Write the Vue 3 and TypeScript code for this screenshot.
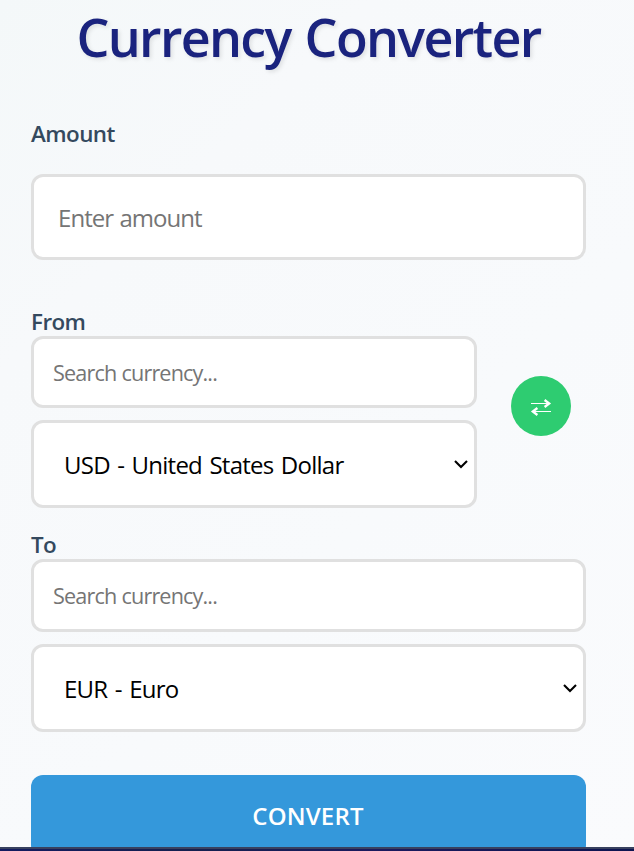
<script setup lang="ts">
import { ref } from 'vue'

interface Currency {
  code: string
  name: string
}

const currencies: Currency[] = [
  { code: 'USD', name: 'United States Dollar' },
  { code: 'EUR', name: 'Euro' },
]

const amount = ref('')
const fromSearch = ref('')
const toSearch = ref('')
const from = ref('USD')
const to = ref('EUR')

function swap(): void {
  const previous = from.value
  from.value = to.value
  to.value = previous
}
</script>

<template>
  <div class="page">
    <main class="converter">
      <h1 class="title">Currency Converter</h1>

      <label class="label amount-label" for="amount">Amount</label>
      <input id="amount" v-model="amount" class="field amount" placeholder="Enter amount" />

      <div class="row">
        <section class="group">
          <label class="label" for="from">From</label>
          <input v-model="fromSearch" class="field search" placeholder="Search currency..." />
          <div class="select">
            <select id="from" v-model="from" class="field">
              <option v-for="c in currencies" :key="c.code" :value="c.code">{{ c.code }} - {{ c.name }}</option>
            </select>
            <svg class="chevron" viewBox="0 0 16 10"><path d="M2 2 8 8 14 2" /></svg>
          </div>
        </section>
        <button class="swap" type="button" @click="swap">
          <svg viewBox="0 0 20 16" width="20" height="16">
            <path class="shaft" d="M0 3.5H18M2 11.5H20" />
            <path class="head" d="M13.6 0 L18.2 3.5 L13.6 7M6.4 8 L1.8 11.5 L6.4 15" />
          </svg>
        </button>
      </div>

      <section class="group to">
        <label class="label" for="to">To</label>
        <input v-model="toSearch" class="field search" placeholder="Search currency..." />
        <div class="select">
          <select id="to" v-model="to" class="field">
            <option v-for="c in currencies" :key="c.code" :value="c.code">{{ c.code }} - {{ c.name }}</option>
          </select>
          <svg class="chevron" viewBox="0 0 16 10"><path d="M2 2 8 8 14 2" /></svg>
        </div>
      </section>

      <button class="convert" type="button">CONVERT</button>
    </main>
    <footer class="footer"></footer>
  </div>
</template>

<style>
body {
  margin: 0;
  overflow: hidden;
}
</style>

<style scoped>
.page {
  display: flex;
  flex-direction: column;
  height: 851px;
  overflow: hidden;
  background: linear-gradient(135deg, #f4f8f9 0%, #f7f9fb 25%, #f8fafc 60%, #fafbfd 100%);
  font-family: 'Segoe UI', 'Open Sans', 'Noto Sans', sans-serif;
}
.converter {
  box-sizing: border-box;
  height: 847px;
  flex: none;
  overflow: hidden;
  padding: 0 48px 0 31px;
}
.title {
  margin: 0;
  height: 120px;
  color: #1a237e;
  font-size: 52px;
  font-weight: 600;
  line-height: 73px;
  letter-spacing: -1.65px;
  word-spacing: 2px;
  text-align: center;
  white-space: nowrap;
  text-shadow: 2px 2px 4px rgba(0, 0, 0, 0.1);
}
.label {
  display: block;
  height: 28px;
  color: #34495e;
  font-size: 22.4px;
  font-weight: 600;
  line-height: 28px;
  letter-spacing: -0.55px;
}
.amount-label {
  height: 54px;
}
.field {
  display: block;
  box-sizing: border-box;
  width: 100%;
  margin: 0;
  border: 3px solid #e0e0e0;
  border-radius: 12px;
  outline: none;
  background: #fff;
  color: #000;
  font-family: inherit;
}
.field::placeholder {
  color: #757575;
  opacity: 1;
}
.amount {
  height: 86px;
  padding: 0 24px;
  font-size: 24px;
  letter-spacing: -0.95px;
  word-spacing: 1px;
}
.row {
  display: flex;
  gap: 34px;
  margin-top: 48px;
}
.row .group {
  width: 446px;
}
.search {
  height: 72px;
  padding: 0 19px;
  font-size: 21.6px;
  letter-spacing: -0.85px;
  word-spacing: 0.5px;
}
.to {
  margin-top: 23px;
}
.to .search {
  height: 73px;
}
.select {
  display: grid;
  align-items: center;
  margin-top: 12px;
}
.select > * {
  grid-area: 1 / 1;
}
.select select {
  height: 88px;
  padding: 0 30px;
  appearance: none;
  font-size: 24px;
  letter-spacing: -0.75px;
  word-spacing: 1.9px;
}
.chevron {
  justify-self: end;
  width: 16px;
  height: 10px;
  margin-right: 8px;
  fill: none;
  stroke: #000;
  stroke-width: 2.1;
  pointer-events: none;
}
.swap {
  display: flex;
  align-items: center;
  justify-content: center;
  width: 60px;
  height: 60px;
  margin-top: 68px;
  padding: 4px 0 0;
  border: 0;
  border-radius: 50%;
  background: #2ecc71;
}
.swap svg {
  overflow: visible;
  fill: none;
  stroke: #fff;
}
.shaft {
  stroke-width: 1.2;
}
.head {
  stroke-width: 2.3;
}
.convert {
  width: 100%;
  height: 82px;
  margin-top: 43px;
  padding: 0 1px 2px 0;
  border: 0;
  border-radius: 12px;
  background: #3498db;
  color: #fff;
  font-family: inherit;
  font-size: 24px;
  font-weight: 600;
  letter-spacing: 0.2px;
}
.footer {
  height: 2px;
  border-top: 2px solid #38415f;
  background: linear-gradient(90deg, #131b60, #14204f 30%, #1a1a5e 60%, #0d1450);
}
</style>
